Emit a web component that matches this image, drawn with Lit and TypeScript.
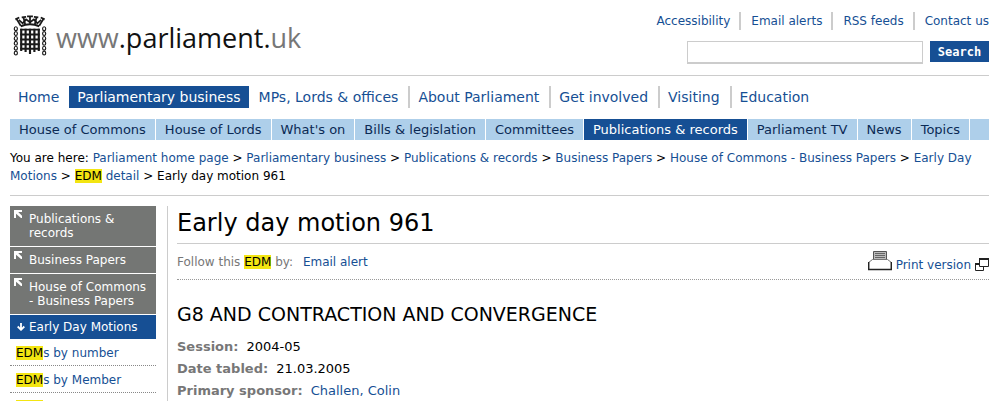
import { LitElement, html, css, svg } from "lit";
import { customElement } from "lit/decorators.js";

const UTILITY = ["Accessibility", "Email alerts", "RSS feeds", "Contact us"];
const PRIMARY = ["Home", "Parliamentary business", "MPs, Lords & offices", "About Parliament", "Get involved", "Visiting", "Education"];
const SECONDARY = ["House of Commons", "House of Lords", "What's on", "Bills & legislation", "Committees", "Publications & records", "Parliament TV", "News", "Topics"];
const TRAIL = ["Parliament home page", "Parliamentary business", "Publications & records", "Business Papers", "House of Commons - Business Papers", "Early Day Motions"];
const PARENTS = ["Publications & records", "Business Papers", "House of Commons - Business Papers"];
const CHILDREN = ["s by number", "s by Member", "s by topic"];

const edm = html`<mark>EDM</mark>`;

const portcullis = html`
  <svg class="crest" viewBox="0 0 34 42" aria-hidden="true">
    <g fill="none" stroke="#1a1a1a">
      <path stroke-width="2" d="M7.500 11.500 Q17 7.500 26.500 11.500"/>
      <path stroke-width="1.800" d="M7.500 11 L3.500 4.500 M26.500 11 L30.500 4.500 M2 4.500 L6 2.500 M32 4.500 L28 2.500 M12 9.500 L10.500 3 M22 9.500 L23.500 3 M17 9 V1 M14 1.500 H20 M8.500 2.500 L13 2 M25.500 2.500 L21 2"/>
      <path stroke-width="1.800" d="M5.500 5 L9.500 8.500 L13 4.500 L17 7.500 L21 4.500 L24.500 8.500 L28.500 5"/>
      <path stroke-width="2" d="M7 15 H27 M7 20 H27 M7 25 H27 M7 30 H27 M7 34.500 H27"/>
      <path stroke-width="2.200" d="M8 14 V37 M12.500 14 V38 M17 14 V40 M21.500 14 V38 M26 14 V37"/>
      ${[14, 19, 24, 29, 34, 39].map((y) => svg`
        <ellipse cx="2.500" cy=${y} rx="1.600" ry="2" stroke-width="1.200"/>
        <ellipse cx="31.500" cy=${y} rx="1.600" ry="2" stroke-width="1.200"/>`)}
    </g>
  </svg>`;

const upLeft = html`<svg class="up" viewBox="0 0 8 8" aria-hidden="true"><path fill="#fff" d="M0 0H8V2H4.200L8 5.800V8H7L2 3.800V8H0Z"/></svg>`;
const down = html`<svg class="down" viewBox="0 0 8 8" aria-hidden="true"><path fill="none" stroke="#fff" stroke-width="1.800" d="M4 0V7M.700 3.500L4 6.800L7.300 3.500"/></svg>`;

const printer = html`
  <svg class="printer" viewBox="0 0 24 20" aria-hidden="true">
    <path fill="#bbb" stroke="#555" d="M5.500 8V.500H18.500V8"/>
    <path stroke="#666" d="M7 2.500H17M7 4.500H17M7 6.500H17"/>
    <path fill="#fff" stroke="#777" d="M4.500 8.500H19.500L23.500 11.500V18.500H.500V11.500Z"/>
    <path fill="none" stroke="#222" stroke-width="1.500" d="M.700 11V18.500H23.300V11"/>
  </svg>`;
const popup = html`
  <svg class="popup" viewBox="0 0 14 13" aria-hidden="true">
    <path fill="#fff" stroke="#222" d="M.500 5.500H8.500V12.500H.500Z"/><path stroke="#222" stroke-width="2" d="M0 6H9"/>
    <path fill="#fff" stroke="#222" d="M4.500 .500H13.500V8.500H4.500Z"/><path stroke="#222" stroke-width="2" d="M4 1H14"/>
  </svg>`;

@customElement("app-root")
export class AppRoot extends LitElement {
  static styles = css`
    :host { display: block; height: 100vh; overflow: hidden; background: #fff; color: #000; font-family: Verdana, "DejaVu Sans", sans-serif; font-size: 12px; }
    * { box-sizing: border-box; }
    a { color: #164f94; text-decoration: none; }
    ul, dl, dd { margin: 0; padding: 0; list-style: none; }
    mark { background: #f3e512; color: #000; }
    .page { padding: 0 18px 0 10px; }
    .header { display: flex; justify-content: space-between; height: 76px; padding-top: 12px; border-bottom: 1px solid #ccc; }
    .brand { display: flex; align-items: flex-start; gap: 9px; padding: 3px 0 0 3px; font: 27px/46px "Open Sans", sans-serif; color: #777; }
    .brand b { font-weight: 400; color: #111; }
    .crest { width: 34px; height: 41px; }
    .tools { display: flex; flex-direction: column; align-items: flex-end; gap: 11px; }
    .utility { display: flex; line-height: 18px; }
    .utility li + li { border-left: 2px solid #ccc; margin-left: 9px; padding-left: 10px; }
    .search { display: flex; gap: 7px; }
    .search input { width: 236px; height: 23px; border: 1px solid #ccc; border-bottom-width: 2px; padding: 0 4px; font: inherit; }
    .search button { width: 59px; height: 21px; border: 0; padding: 0; background: #164f94; color: #fff; font: bold 12px "DejaVu Sans Mono", monospace; }
    .primary { display: flex; gap: 2px; padding: 10px 0 11px; font-size: 14px; line-height: 22px; }
    .primary li { padding: 0 8px; }
    .primary .on { background: #164f94; }
    .on a { color: #fff; }
    .primary .rule { border-left: 2px solid #ccc; }
    .secondary { display: flex; gap: 1px; font-size: 13px; line-height: 21px; }
    .secondary li { padding: 0 9px; background: #aecfea; white-space: nowrap; }
    .secondary li:not(.on) a { color: #0b2a55; }
    .secondary .on { background: #164f94; }
    .secondary .fill { flex: 1; padding: 0; }
    .trail { margin: 9px 0 10px; line-height: 18px; }
    .body { display: grid; grid-template-columns: 146px 1fr; gap: 11px; border-top: 1px solid #ccc; padding-top: 10px; }
    .side { line-height: 14px; }
    .parents li { position: relative; margin-bottom: 1px; padding: 6px 6px 6px 19px; background: #747674; }
    .parents a { color: #fff; }
    .up { position: absolute; left: 4px; top: 4px; width: 8px; height: 8px; }
    .side .current { display: flex; align-items: center; gap: 4px; height: 24px; background: #164f94; color: #fff; padding-left: 7px; }
    .down { width: 8px; height: 8px; }
    .children li { padding: 7px 6px 5px; border-bottom: 1px dotted #888; }
    .main { border-left: 1px solid #ccc; padding-left: 9px; }
    h1 { margin: 0; height: 38px; border-bottom: 1px solid #ccc; font-size: 24px; line-height: 34px; font-weight: 400; }
    .follow { display: flex; justify-content: space-between; height: 36px; border-bottom: 1px dotted #999; line-height: 36px; color: #777; }
    .follow a { margin-left: 6px; }
    .print { display: flex; align-items: flex-end; gap: 4px; padding-bottom: 8px; line-height: 12px; }
    .print a { margin: 0; }
    .printer { width: 24px; height: 20px; }
    .popup { width: 14px; height: 13px; }
    h2 { margin: 20px 0 8px; font-size: 19px; line-height: 28px; font-weight: 400; }
    dl { font-size: 13px; line-height: 22px; }
    dl div { display: flex; gap: 8px; }
    dt { font-weight: 700; color: #777; }
  `;

  render() {
    return html`
      <div class="page">
        <header class="header">
          <div class="brand">${portcullis}<span>www<b>.parliament.</b>uk</span></div>
          <div class="tools">
            <ul class="utility">${UTILITY.map((t) => html`<li><a href="#">${t}</a></li>`)}</ul>
            <form class="search"><input type="text" aria-label="Search" /><button type="button">Search</button></form>
          </div>
        </header>
        <nav>
          <ul class="primary">${PRIMARY.map((t, i) => html`<li class=${i === 1 ? "on" : i > 2 ? "rule" : ""}><a href="#">${t}</a></li>`)}</ul>
          <ul class="secondary">${SECONDARY.map((t, i) => html`<li class=${i === 5 ? "on" : ""}><a href="#">${t}</a></li>`)}<li class="fill"></li></ul>
        </nav>
        <div class="trail">You are here: ${TRAIL.map((t) => html`<a href="#">${t}</a> &gt; `)}<a href="#">${edm} detail</a> &gt; Early day motion 961</div>
        <div class="body">
          <nav class="side">
            <ul class="parents">${PARENTS.map((t) => html`<li>${upLeft}<a href="#">${t}</a></li>`)}</ul>
            <a class="current" href="#">${down}Early Day Motions</a>
            <ul class="children">${CHILDREN.map((t) => html`<li><a href="#">${edm}${t}</a></li>`)}</ul>
          </nav>
          <main class="main">
            <h1>Early day motion 961</h1>
            <div class="follow">
              <span>Follow this ${edm} by: <a href="#">Email alert</a></span>
              <span class="print">${printer}<a href="#">Print version</a>${popup}</span>
            </div>
            <h2>G8 AND CONTRACTION AND CONVERGENCE</h2>
            <dl>
              <div><dt>Session:</dt><dd>2004-05</dd></div>
              <div><dt>Date tabled:</dt><dd>21.03.2005</dd></div>
              <div><dt>Primary sponsor:</dt><dd><a href="#">Challen, Colin</a></dd></div>
            </dl>
          </main>
        </div>
      </div>`;
  }
}
